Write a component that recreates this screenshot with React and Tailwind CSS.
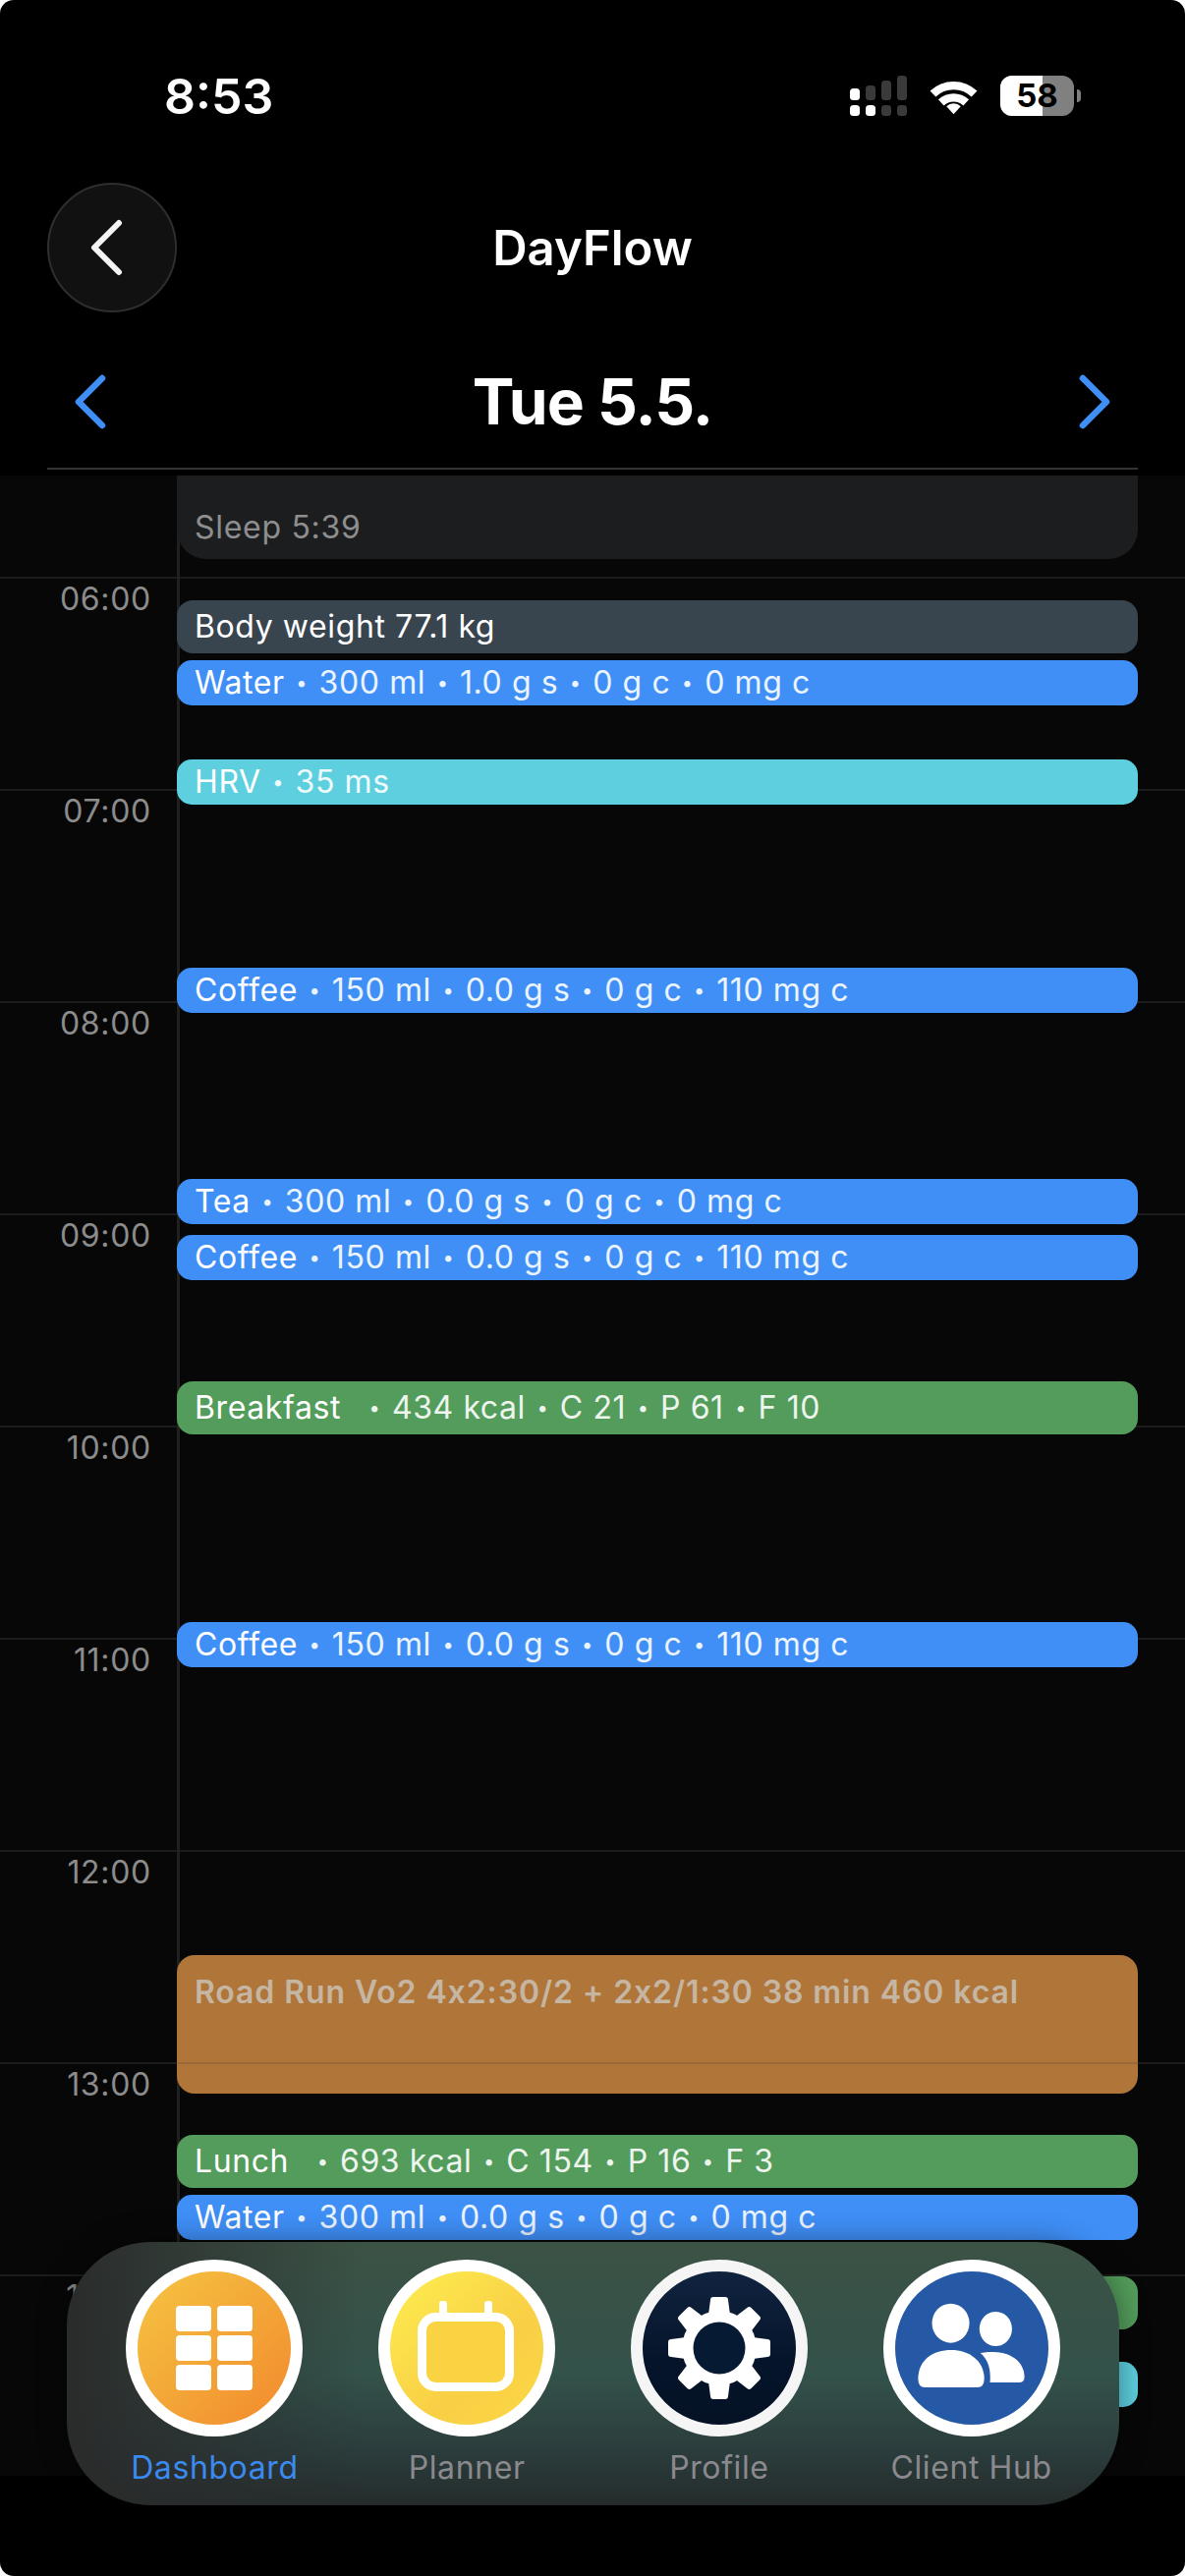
const HOURS = ['06:00', '07:00', '08:00', '09:00', '10:00', '11:00', '12:00', '13:00', '14:00'];

const BLUE = 'h-[46px] rounded-[15px] bg-[#3f8ff7]';
const TEAL = 'h-[46px] rounded-[15px] bg-[#5dcfdf]';
const GREEN = 'h-[54px] rounded-[16px] bg-[#539c5b]';

const EVENTS = [
  { id: 'weight', mt: 'mt-[42px]', box: 'h-[54px] rounded-[16px] bg-[#38444e]', name: 'Body weight 77.1 kg' },
  { id: 'water1', mt: 'mt-[7px]', box: BLUE, name: 'Water', info: ['300 ml', '1.0 g s', '0 g c', '0 mg c'] },
  { id: 'hrv', mt: 'mt-[55px]', box: TEAL, name: 'HRV', info: ['35 ms'] },
  { id: 'coffee1', mt: 'mt-[166px]', box: BLUE, name: 'Coffee', info: ['150 ml', '0.0 g s', '0 g c', '110 mg c'] },
  { id: 'tea', mt: 'mt-[169px]', box: BLUE, name: 'Tea', info: ['300 ml', '0.0 g s', '0 g c', '0 mg c'] },
  { id: 'coffee2', mt: 'mt-[11px]', box: BLUE, name: 'Coffee', info: ['150 ml', '0.0 g s', '0 g c', '110 mg c'] },
  { id: 'breakfast', mt: 'mt-[103px]', box: GREEN, name: 'Breakfast', gap: true, info: ['434 kcal', 'C 21', 'P 61', 'F 10'] },
  { id: 'coffee3', mt: 'mt-[191px]', box: BLUE, name: 'Coffee', info: ['150 ml', '0.0 g s', '0 g c', '110 mg c'] },
];

const AFTER_RUN = [
  { id: 'lunch', mt: 'mt-[42px]', box: GREEN, name: 'Lunch', gap: true, info: ['693 kcal', 'C 154', 'P 16', 'F 3'] },
  { id: 'water2', mt: 'mt-[7px]', box: BLUE, name: 'Water', info: ['300 ml', '0.0 g s', '0 g c', '0 mg c'] },
  { id: 'hidden1', mt: 'mt-[37px]', box: GREEN, name: '' },
  { id: 'hidden2', mt: 'mt-[33px]', box: TEAL, name: '' },
];

function Event({ ev }) {
  return (
    <div className={[ev.mt, ev.box, 'flex items-center pl-[18px] text-[32px] tracking-[0.6px] text-white whitespace-nowrap'].join(' ')}>
      <span>{ev.name}</span>
      {ev.gap && <span className="w-[17px]" />}
      {ev.info && ev.info.map((t) => (
        <span key={t} className="flex items-center text-white/90">
          <span className="mx-[11.5px] text-[20px]">•</span>
          {t}
        </span>
      ))}
    </div>
  );
}

function StatusBar() {
  return (
    <div className="h-[186px] flex items-start justify-between pl-[167px] pr-[106px] pt-[70px] text-white">
      <div className="text-[50px] leading-[56px] font-semibold">8:53</div>
      <div className="flex items-start gap-[23px] pt-[7px]">
        <svg width="58" height="41" viewBox="0 0 58 41">
          <rect x="0" y="13" width="10" height="12" rx="3.5" fill="#fff" />
          <rect x="16" y="10" width="10" height="15" rx="3.5" fill="#3a3a3a" />
          <rect x="32" y="5" width="10" height="20" rx="3.5" fill="#3a3a3a" />
          <rect x="48" y="0" width="10" height="25" rx="3.5" fill="#3a3a3a" />
          <rect x="0" y="30" width="10" height="11" rx="3.5" fill="#fff" />
          <rect x="16" y="30" width="10" height="11" rx="3.5" fill="#fff" />
          <rect x="32" y="30" width="10" height="11" rx="3.5" fill="#3a3a3a" />
          <rect x="48" y="30" width="10" height="11" rx="3.5" fill="#3a3a3a" />
        </svg>
        <svg width="49" height="38" viewBox="0 0 50 38" className="mt-[2px]" fill="none" stroke="#fff" strokeWidth="8.5">
          <path d="M3.5 16.5 A31 31 0 0 1 46.5 16.5" />
          <path d="M12 25.5 A19 19 0 0 1 38 25.5" />
          <path d="M17.6 29.5 L25 37.5 L32.4 29.5 A10.5 10.5 0 0 0 17.6 29.5 Z" fill="#fff" stroke="none" />
        </svg>
        <div className="flex items-center gap-[3px]">
          <div className="relative w-[75px] h-[41px] rounded-[12px] overflow-hidden bg-[#808080] flex items-center justify-center">
            <div className="absolute left-0 top-0 bottom-0 w-[43px] bg-white" />
            <span className="relative text-black text-[33px] leading-none font-bold">58</span>
          </div>
          <div className="w-[4px] h-[13px] rounded-r-full bg-[#808080]" />
        </div>
      </div>
    </div>
  );
}

function TitleRow() {
  return (
    <div className="h-[132px] px-[48px] grid grid-cols-[132px_1fr_132px] items-center">
      <button className="w-[132px] h-[132px] rounded-full bg-[#111111] border-2 border-[#2e2e2e] flex items-center justify-center">
        <svg width="38" height="62" viewBox="0 0 38 62" fill="none" stroke="#f4f4f4" strokeWidth="6" strokeLinecap="round" strokeLinejoin="round" className="-translate-x-[5px]">
          <path d="M31 6 L6 31 L31 56" />
        </svg>
      </button>
      <div className="pt-[2px] text-center text-white text-[49px] leading-[56px] font-semibold">DayFlow</div>
    </div>
  );
}

function DateRow() {
  return (
    <div className="mt-[39px] h-[104px] px-[75px] flex items-center justify-between text-[#3f8ff7]">
      <svg width="33" height="56" viewBox="0 0 33 56" fill="none" stroke="currentColor" strokeWidth="6.5" strokeLinecap="round" strokeLinejoin="round">
        <path d="M29 4 L5 28 L29 52" />
      </svg>
      <div className="text-white text-[64px] leading-[76px] font-bold tracking-[-1px]">Tue 5.5.</div>
      <svg width="33" height="56" viewBox="0 0 33 56" fill="none" stroke="currentColor" strokeWidth="6.5" strokeLinecap="round" strokeLinejoin="round">
        <path d="M4 4 L28 28 L4 52" />
      </svg>
    </div>
  );
}

function Timeline() {
  return (
    <div className="relative h-[2036px] bg-[#070707]">
      <div className="h-[103px]" />
      {HOURS.map((h, i) => (
        <div key={h} className={[i === 8 ? 'h-[205px]' : 'h-[216px]', 'border-t-2 border-[#1d1d1d]'].join(' ')}>
          <div className="w-[154px] pt-[2px] text-right text-[32px] leading-[38px] tracking-[0.7px] text-[#8c8c8c]">{h}</div>
        </div>
      ))}
      <div className="absolute left-[180px] top-0 bottom-0 w-[3px] bg-[#202020]" />

      {/* events sit over the hour grid */}
      <div className="absolute top-0 left-[180px] w-[978px] flex flex-col">
        <div className="h-[85px] rounded-b-[30px] bg-[#1c1d1f] flex items-end pl-[18px] pb-[13px] text-[32px] leading-[38px] tracking-[0.7px] text-[#8e8e8e]">
          Sleep 5:39
        </div>
        {EVENTS.map((ev) => <Event key={ev.id} ev={ev} />)}
        <div className="relative mt-[293px] h-[141px] rounded-[18px] bg-[#b07539] pl-[18px] pt-[19px] text-[32px] leading-[38px] font-semibold tracking-[0.9px] text-[#c5b5a3] whitespace-nowrap">
          Road Run Vo2 4x2:30/2 + 2x2/1:30 38 min 460 kcal
          <div className="absolute left-0 right-0 top-[109px] h-[2px] bg-[#9a693a]" />
        </div>
        {AFTER_RUN.map((ev) => <Event key={ev.id} ev={ev} />)}
      </div>
    </div>
  );
}

function Ring({ inner, ring = 'border-white', children }) {
  return (
    <div className={['w-[180px] h-[180px] rounded-full border-[12px] flex items-center justify-center', ring, inner].join(' ')}>
      {children}
    </div>
  );
}

function DashboardIcon() {
  return (
    <Ring inner="bg-[linear-gradient(135deg,#f5c542,#f2892d)]">
      <div className="grid grid-cols-2 gap-x-[6px] gap-y-[4px] w-[78px]">
        {[1, 2, 3, 4, 5, 6].map((n) => (
          <div key={n} className="h-[26px] rounded-[4px] bg-white" />
        ))}
      </div>
    </Ring>
  );
}

function PlannerIcon() {
  return (
    <Ring inner="bg-[linear-gradient(135deg,#fdee50,#f9cf45_60%,#fad845)]">
      <svg width="100" height="96" viewBox="0 0 100 96" fill="none">
        <rect x="22" y="0" width="8" height="16" rx="3" fill="#fff" />
        <rect x="68" y="0" width="8" height="16" rx="3" fill="#fff" />
        <rect x="4.5" y="16.5" width="89" height="71" rx="14" fill="#f9d342" stroke="#fff" strokeWidth="9" />
      </svg>
    </Ring>
  );
}

function ProfileIcon() {
  return (
    <Ring ring="border-[#f5f5f5]" inner="bg-[linear-gradient(to_bottom,#10233f,#051429_60%,#051226)]">
      <svg width="110" height="110" viewBox="-55 -55 110 110">
        <circle r="38" fill="#fff" />
        {[0, 45, 90, 135, 180, 225, 270, 315].map((a) => (
          <path key={a} d="M-11 -34 L-9 -49 Q-9 -52 -6 -52 L6 -52 Q9 -52 9 -49 L11 -34 Z" fill="#fff" transform={`rotate(${a})`} />
        ))}
        <circle r="26.5" fill="#071a33" />
      </svg>
    </Ring>
  );
}

function ClientIcon() {
  return (
    <Ring ring="border-[10px] border-white" inner="bg-[#2558a5]">
      <svg width="160" height="160" viewBox="0 0 160 160" fill="#fff">
        <ellipse cx="58" cy="54" rx="19.5" ry="20.5" />
        <ellipse cx="105" cy="60" rx="17" ry="18" />
        <path d="M24 112 C24 92 40 82 58.500 82 C77 82 93 93 93 112 Q93 121 86 121 L31 121 Q24 121 24 112 Z" />
        <path d="M89 85 C95 84 99 84 103 84 C120 84 135 94 135 110 Q135 116 129 116 L99 116 C100 103 98 93 89 85 Z" />
      </svg>
    </Ring>
  );
}

const TABS = [
  { label: 'Dashboard', icon: DashboardIcon, tone: 'text-[#3b8af0]' },
  { label: 'Planner', icon: PlannerIcon, tone: 'text-[#8a8a8e]' },
  { label: 'Profile', icon: ProfileIcon, tone: 'text-[#8a8a8e]' },
  { label: 'Client Hub', icon: ClientIcon, tone: 'text-[#8a8a8e]' },
];

function TabBar() {
  return (
    <div className="absolute left-[68px] top-[2282px] w-[1071px] h-[268px] rounded-[85px] px-[22px] pt-[18px] grid grid-cols-4 shadow-[0_0_30px_rgba(0,0,0,0.4)] bg-[linear-gradient(to_right,#2a2b2b,transparent_28%),linear-gradient(to_bottom,#3c5245,#33524a_50%,#2b3c3c_80%,#252b2b)]">
      {TABS.map((t) => {
        const Icon = t.icon;
        return (
          <div key={t.label} className="flex flex-col items-center">
            <Icon />
            <div className={['mt-[13px] text-[32px] leading-[38px] tracking-[0.6px]', t.tone].join(' ')}>{t.label}</div>
          </div>
        );
      })}
    </div>
  );
}

export default function App() {
  return (
    <div className="h-[2622px] bg-white font-['Inter','Noto_Sans',sans-serif]">
      <div className="relative h-full rounded-[14px] bg-black overflow-hidden">
        <StatusBar />
        <TitleRow />
        <DateRow />
        <div className="mt-[15px] mx-[48px] h-[2px] bg-[#333333]" />
        <div className="h-[6px]" />
        <Timeline />
        <TabBar />
      </div>
    </div>
  );
}
